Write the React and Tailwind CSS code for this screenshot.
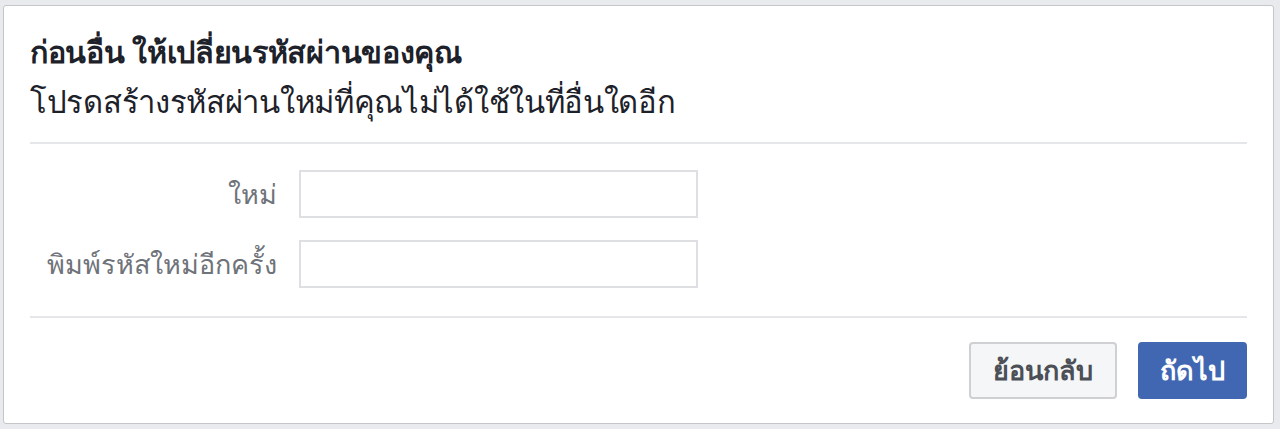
import React from "react";

const App = () => {
  return (
    <div className="min-h-[429px] w-[1280px] bg-[#e9eaed] pt-[5px] pl-[3px] pr-[6px] pb-[5px] font-['Noto_Sans','Liberation_Sans',sans-serif]">
      <div className="h-[419px] rounded-[3px] border border-[#c4c6ca] bg-white px-[26px]">
        {/* Header */}
        <div className="pt-[20px] pb-[16px] text-[31px] leading-[50px] tracking-[-0.3px] text-[#1d2129]">
          <div className="font-bold text-[30.5px]">ก่อนอื่น ให้เปลี่ยนรหัสผ่านของคุณ</div>
          <div>โปรดสร้างรหัสผ่านใหม่ที่คุณไม่ได้ใช้ในที่อื่นใดอีก</div>
        </div>

        <div className="border-t-2 border-[#e5e6e9]" />

        {/* Form */}
        <div className="flex flex-col gap-[22px] pt-[26px] pb-[28px]">
          <div className="flex items-center gap-[22px]">
            <label className="w-[247px] text-right text-[27px] leading-[48px] text-[#6f737a]">ใหม่</label>
            <input
              type="password"
              className="h-[48px] w-[399px] border-2 border-[#dddfe2] bg-white outline-none"
            />
          </div>
          <div className="flex items-center gap-[22px]">
            <label className="w-[247px] text-right text-[27px] leading-[48px] text-[#6f737a]">พิมพ์รหัสใหม่อีกครั้ง</label>
            <input
              type="password"
              className="h-[48px] w-[399px] border-2 border-[#dddfe2] bg-white outline-none"
            />
          </div>
        </div>

        <div className="border-t-2 border-[#e5e6e9]" />

        {/* Footer */}
        <div className="flex justify-end gap-[21px] pt-[24px]">
          <button className="h-[57px] w-[148px] rounded-[4px] border-2 border-[#ced0d4] bg-[#f5f6f7] text-[27px] font-bold text-[#4b4f56]">
            ย้อนกลับ
          </button>
          <button className="h-[57px] w-[109px] rounded-[4px] border-2 border-[#4267b2] bg-[#4267b2] text-[27px] font-bold text-white">
            ถัดไป
          </button>
        </div>
      </div>
    </div>
  );
};

export default App;
